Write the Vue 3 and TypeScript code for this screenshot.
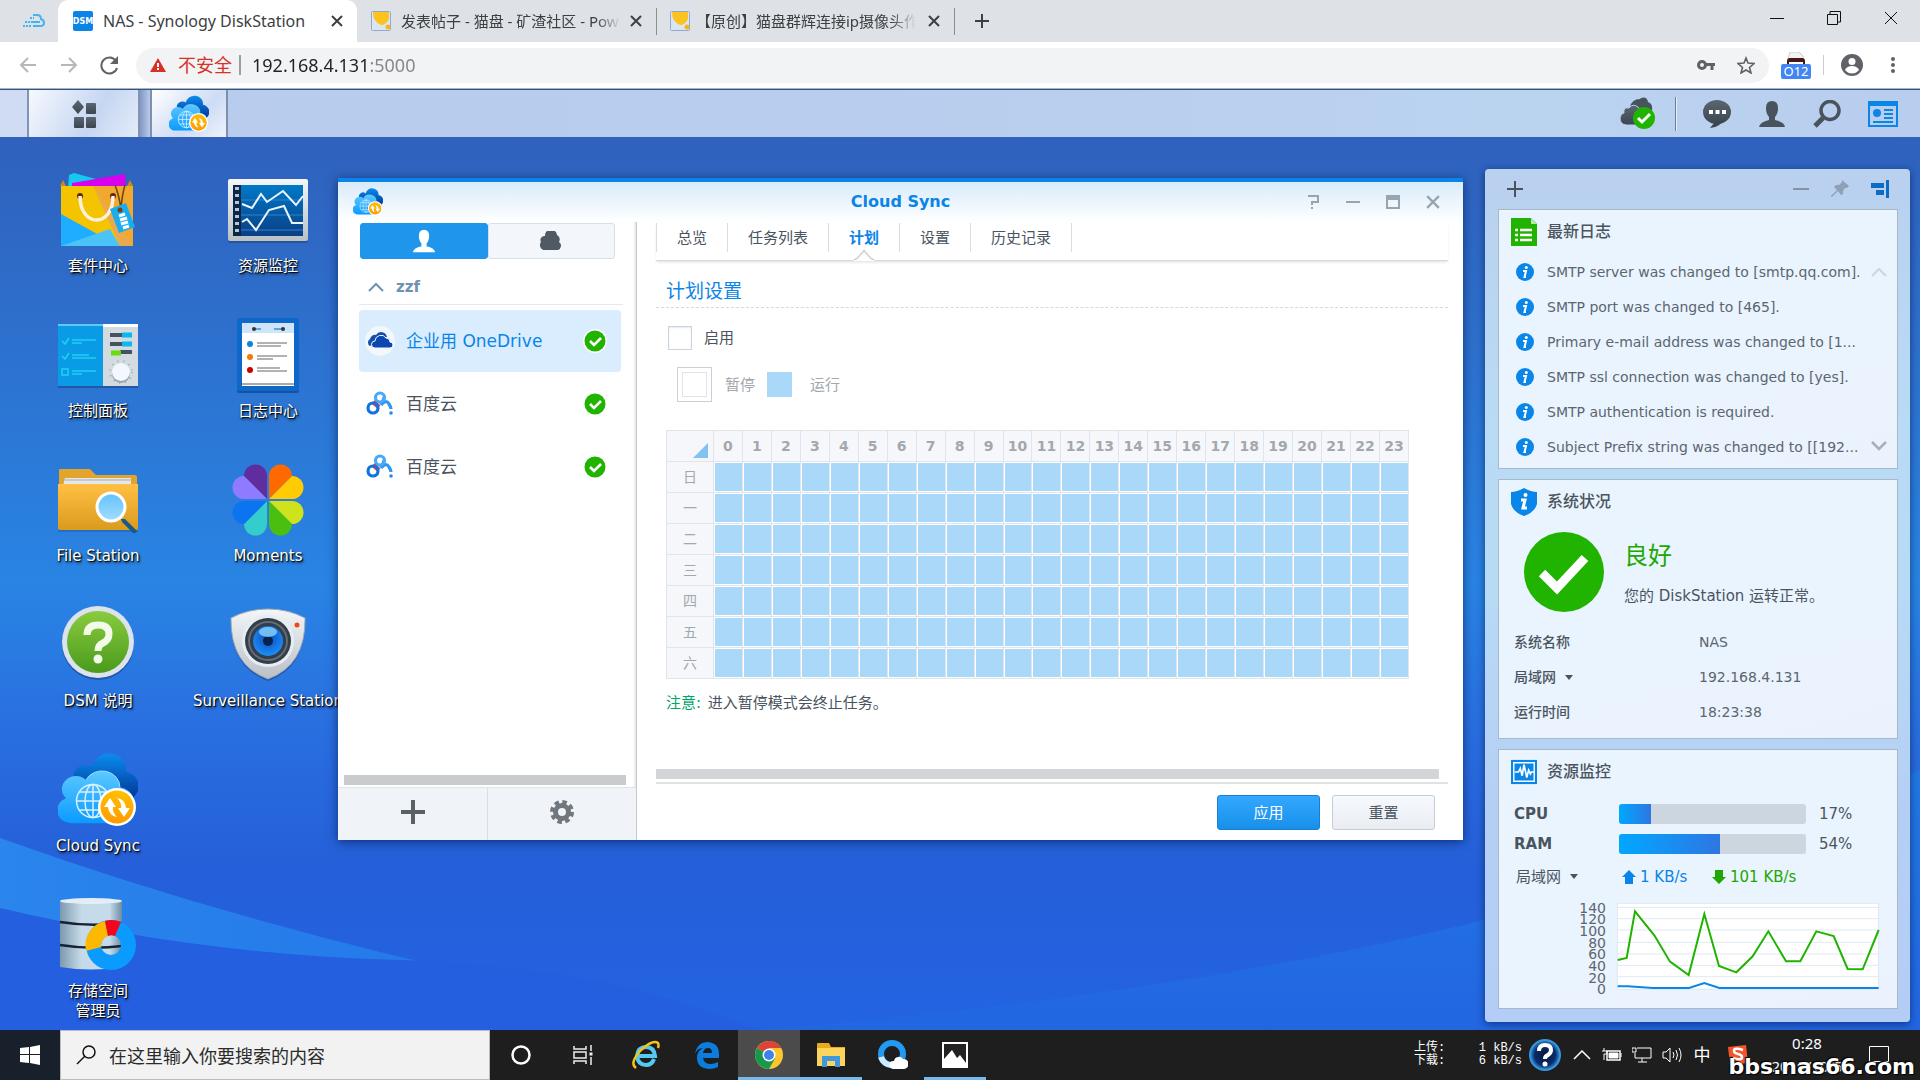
<script setup lang="ts">
import { ref } from 'vue'

interface DesktopApp { icon: string; label: string }
interface Connection { icon: string; name: string }

const columns: DesktopApp[][] = [
  [
    { icon: 'i-package', label: '套件中心' },
    { icon: 'i-control', label: '控制面板' },
    { icon: 'i-file', label: 'File Station' },
    { icon: 'i-help', label: 'DSM 说明' },
    { icon: 'i-cloudsync', label: 'Cloud Sync' },
    { icon: 'i-storage', label: '存储空间\n管理员' },
  ],
  [
    { icon: 'i-monitor', label: '资源监控' },
    { icon: 'i-log', label: '日志中心' },
    { icon: 'i-moments', label: 'Moments' },
    { icon: 'i-surveillance', label: 'Surveillance Station' },
  ],
]

const connections: Connection[] = [
  { icon: 'i-onedrive', name: '企业用 OneDrive' },
  { icon: 'i-baidu', name: '百度云' },
  { icon: 'i-baidu', name: '百度云' },
]
const selected = ref(0)

const tabs = ['总览', '任务列表', '计划', '设置', '历史记录']
const activeTab = ref(2)

const hours = Array.from({ length: 24 }, (_, i) => i)
const days = ['日', '一', '二', '三', '四', '五', '六']

const logs = [
  'SMTP server was changed to [smtp.qq.com].',
  'SMTP port was changed to [465].',
  'Primary e-mail address was changed to [1...',
  'SMTP ssl connection was changed to [yes].',
  'SMTP authentication is required.',
  'Subject Prefix string was changed to [[192...',
]

const meters = [
  { name: 'CPU', value: 17 },
  { name: 'RAM', value: 54 },
]

const axis = [140, 120, 100, 80, 60, 40, 20, 0]
const enabled = ref(false)
const address = ref('192.168.4.131:5000')
const query = ref('')
</script>

<template>
  <div class="screen">
    <svg class="defs" width="0" height="0" aria-hidden="true">
      <defs>
        <linearGradient id="g-front" x1="0" y1="0" x2="0" y2="1"><stop offset="0" stop-color="#5cc8ff" /><stop offset="1" stop-color="#0a9bff" /></linearGradient>
        <linearGradient id="g-back" x1="0" y1="0" x2="0" y2="1"><stop offset="0" stop-color="#0a8df0" /><stop offset="1" stop-color="#00308f" /></linearGradient>
        <linearGradient id="g-badge" x1="0" y1="0" x2="0" y2="1"><stop offset="0" stop-color="#ffc000" /><stop offset="1" stop-color="#ff9a00" /></linearGradient>
        <linearGradient id="g-silver" x1="0" y1="0" x2="0" y2="1"><stop offset="0" stop-color="#f4f6f8" /><stop offset="1" stop-color="#b9c0c6" /></linearGradient>
        <linearGradient id="g-disk" x1="0" y1="0" x2="1" y2="0"><stop offset="0" stop-color="#7d99ae" /><stop offset=".35" stop-color="#c6dbe9" /><stop offset=".8" stop-color="#c6dbe9" /><stop offset="1" stop-color="#6d8ba3" /></linearGradient>
        <linearGradient id="g-folder" x1="0" y1="0" x2="0" y2="1"><stop offset="0" stop-color="#ffc043" /><stop offset="1" stop-color="#d99a1d" /></linearGradient>
        <linearGradient id="g-green" x1="0" y1="0" x2="0" y2="1"><stop offset="0" stop-color="#8acb3f" /><stop offset="1" stop-color="#4a9a1c" /></linearGradient>
        <linearGradient id="g-screen" x1="0" y1="0" x2="0" y2="1"><stop offset="0" stop-color="#0079c8" /><stop offset="1" stop-color="#0a3f86" /></linearGradient>
        <linearGradient id="g-glass" x1="0" y1="0" x2="0" y2="1"><stop offset="0" stop-color="#62c3fb" /><stop offset="1" stop-color="#a4dcfd" /></linearGradient>
        <radialGradient id="g-lens" cx=".5" cy=".4" r=".6"><stop offset="0" stop-color="#0d4fa5" /><stop offset=".45" stop-color="#1568d8" /><stop offset="1" stop-color="#1a90f5" /></radialGradient>
        <radialGradient id="g-ask" cx=".5" cy=".5" r=".5"><stop offset="0" stop-color="#06143a" /><stop offset=".7" stop-color="#0b2d6c" /><stop offset="1" stop-color="#2f95dd" /></radialGradient>
        <linearGradient id="g-dark" x1="0" y1="0" x2="0" y2="1"><stop offset="0" stop-color="#5a6671" /><stop offset="1" stop-color="#3c4650" /></linearGradient>
      </defs>

      <symbol id="i-cloudsync" viewBox="0 0 80 80">
        <g transform="translate(0 6) scale(1 .92)">
          <path d="M20 30a11 11 0 0 1 14-18 17 17 0 0 1 34 5 16 16 0 0 1 9 26q-4 6-12 6H30z" fill="url(#g-back)" />
          <path d="M13 73a14 14 0 0 1-5-27 12 12 0 0 1 20-20 18 18 0 0 1 34 8 17 17 0 0 1 8 30q-4 9-10 9z" fill="url(#g-front)" />
          <path d="M28 26a18 18 0 0 1 34 8" fill="none" stroke="#a7e1ff" stroke-width="1" />
        </g>
        <g fill="none" stroke="#d8f1ff" stroke-width="1.500"><circle cx="35" cy="51" r="16.500" /><ellipse cx="35" cy="51" rx="8" ry="16.500" /><path d="M35 34v34M18.500 51h33M21 42h28M21 60h28" /></g>
        <circle cx="59" cy="57" r="19" fill="#fff" /><circle cx="59" cy="57" r="16.500" fill="url(#g-badge)" />
        <path d="M46 57l6-9 6 9h-3q-1 5 4 10-8-1-9-10zM72 58l-6 9-6-9h3q1-5-4-10 8 1 9 10z" fill="#fff" />
      </symbol>

      <symbol id="i-package" viewBox="0 0 80 80">
        <path d="M11 5l5-2 22 6-5 9H10z" fill="#15c8f0" /><path d="M14 13l53-9 1 14H14z" fill="#d900f0" />
        <path d="M5 10l3 6h-6zM72 10l-3 6h6z" fill="#c88a1a" />
        <path d="M3 16h72v60H3z" fill="#f4c400" /><path d="M35 16h40v60z" fill="#f2a82c" /><path d="M35 16L75 76H62z" fill="#e9a94e" /><path d="M3 44l58 32H3z" fill="#1fadff" /><path d="M3 76l49-17 10 17z" fill="#4cc3f7" />
        <circle cx="22" cy="26" r="3" fill="#5c2c10" /><circle cx="55" cy="26" r="3" fill="#5c2c10" />
        <path d="M22 26c0 32 33 32 33 0" fill="none" stroke="#fff1dc" stroke-width="3.500" />
        <path d="M57 15q4 10 6 24q1-14 4-24" fill="none" stroke="#6b4512" stroke-width="1.500" />
        <path d="M52 39l16-6 9 24-16 6z" fill="#18adf2" /><circle cx="62" cy="40" r="2.500" fill="#6b4512" /><path d="M61 46l6-2M62 50l7-2M63 54l7-2M65 58l6-2" stroke="#fff" stroke-width="3" />
      </symbol>

      <symbol id="i-monitor" viewBox="0 0 80 80">
        <rect y="10" width="80" height="63" rx="2" fill="#21406d" opacity=".5" /><rect y="9" width="80" height="62" rx="2" fill="url(#g-silver)" />
        <rect x="5" y="15" width="70" height="51" fill="url(#g-screen)" /><rect x="5" y="15" width="8" height="51" fill="#0c2647" />
        <path d="M9 17v48" stroke="#b8c6d6" stroke-width="4" stroke-dasharray="3 4" />
        <path d="M13 30h62M13 45h62M13 60h62" stroke="#2c83cc" /><path d="M14 34l10 4 9-14 6 8 16-11 13 14 7-9M14 52l5-3 9 11 13-20 15-4 8 17h11" fill="none" stroke="#eaf6ff" stroke-width="2" />
      </symbol>

      <symbol id="i-control" viewBox="0 0 80 80">
        <path d="M0 11h80v62H0z" fill="#173a73" opacity=".5" /><path d="M0 9h45v62H0z" fill="#0a9be6" /><path d="M0 9h45v2H0z" fill="#5cc8ff" /><path d="M45 9h35v62H45z" fill="#d3dae0" /><path d="M45 9h35v3H45z" fill="#fff" />
        <path d="M4 26l3 3 4-6M4 41l3 3 4-6M4 54h6v6H4zM14 25h24M14 28h10M14 40h17M14 43h24M14 56h24M14 59h10" fill="none" stroke="#21d0f5" stroke-width="1.500" />
        <path d="M52 20h12M52 29h12M62 37h12" stroke="#46535e" stroke-width="4" /><path d="M64 20h10M64 29h10" stroke="#0bb8f2" stroke-width="5" /><path d="M53 38h10" stroke="#6adb0c" stroke-width="5" />
        <circle cx="63" cy="57" r="11" fill="none" stroke="#9aa8b3" stroke-width="2" stroke-dasharray="1 5" /><circle cx="63" cy="59" r="9" fill="#99a5ae" /><circle cx="63" cy="57" r="9" fill="#f2f8fd" />
      </symbol>

      <symbol id="i-log" viewBox="0 0 80 80">
        <rect x="9" y="5" width="62" height="73" rx="2" fill="#083a84" opacity=".6" /><rect x="9" y="3" width="62" height="73" rx="2" fill="#0d68c9" />
        <path d="M14 8h52v63H14z" fill="#fff" /><path d="M14 8h52v10H14z" fill="#cfe4f8" /><path d="M14 69h52" stroke="#555" />
        <path d="M25 14h8M46 14h8" stroke="#5aa8d8" stroke-width="2" /><circle cx="26" cy="14" r="2" fill="#333" /><circle cx="55" cy="14" r="2" fill="#333" />
        <circle cx="22" cy="29" r="3" fill="#0a86dc" /><circle cx="22" cy="42" r="3" fill="#f57a00" /><circle cx="22" cy="55" r="3" fill="#c80000" />
        <path d="M29 28h30M29 31h24M29 41h30M29 44h16M29 53h23M29 56h30" stroke="#999" stroke-width="1.500" />
      </symbol>

      <symbol id="i-file" viewBox="0 0 80 80">
        <path d="M1 10q0-1 1-1h30l6 6h39q2 0 2 2v20H1z" fill="#e3a42c" /><path d="M7 18h66v8H5z" fill="#e4e6e8" /><path d="M7 20h66" stroke="#a9adb0" />
        <path d="M0 24h80v44q0 2-2 2H2q-2 0-2-2z" fill="url(#g-folder)" /><path d="M0 71h80" stroke="#1b3e6d" opacity=".5" />
        <path d="M63 59l4 0 12 12q-2 4-5 1L64 62z" fill="#175a86" /><circle cx="53" cy="47" r="14" fill="url(#g-glass)" stroke="#fff" stroke-width="3" />
      </symbol>

      <symbol id="i-moments" viewBox="0 0 80 80">
        <path d="M39 39L16 16A11.500 11.500 0 0 1 39 16z" fill="#5f2da0" /><path d="M39 39L16 16A11.500 11.500 0 0 0 16 39z" fill="#8f7bff" />
        <path d="M41 39L64 16A11.500 11.500 0 0 0 41 16z" fill="#ff6a00" /><path d="M41 39L64 16A11.500 11.500 0 0 1 64 39z" fill="#ffcb05" />
        <path d="M39 41L16 64A11.500 11.500 0 0 0 39 64z" fill="#33cdcb" /><path d="M39 41L16 64A11.500 11.500 0 0 1 16 41z" fill="#0c74f0" />
        <path d="M41 41L64 64A11.500 11.500 0 0 1 41 64z" fill="#4bbf10" /><path d="M41 41L64 64A11.500 11.500 0 0 0 64 41z" fill="#cfe31d" />
      </symbol>

      <symbol id="i-help" viewBox="0 0 80 80">
        <circle cx="40" cy="39" r="36" fill="#173a73" opacity=".5" /><circle cx="40" cy="37" r="36" fill="#dbe3ec" /><circle cx="40" cy="37" r="31" fill="url(#g-green)" />
        <path d="M29 30q0-10 11-10t11 9q0 6-6 9-5 2-5 8" fill="none" stroke="#f2fbe8" stroke-width="7" /><circle cx="40" cy="54" r="4.500" fill="#f2fbe8" />
      </symbol>

      <symbol id="i-surveillance" viewBox="0 0 80 80">
        <path d="M40 6Q60 6 77 15Q78 62 40 76Q2 62 3 15Q20 6 40 6z" fill="#173a73" opacity=".5" /><path d="M40 4Q60 4 77 13Q78 60 40 74Q2 60 3 13Q20 4 40 4z" fill="url(#g-silver)" stroke="#9ea8b0" />
        <circle cx="40" cy="36" r="26" fill="#e6edf3" /><circle cx="40" cy="36" r="23" fill="#343e48" /><circle cx="40" cy="36" r="19" fill="none" stroke="#606c78" stroke-width="2" /><circle cx="40" cy="36" r="15" fill="url(#g-lens)" /><circle cx="40" cy="36" r="5" fill="#06224e" />
        <ellipse cx="40" cy="27" rx="9" ry="5" fill="#8ad4ff" opacity=".8" /><circle cx="69" cy="20" r="2.500" fill="#f04a12" />
      </symbol>

      <symbol id="i-storage" viewBox="0 0 80 80">
        <path d="M2 6v66q31 5 62 0V6z" fill="url(#g-disk)" /><ellipse cx="33" cy="6" rx="31" ry="3" fill="#e3edf4" /><path d="M2 27q31 5 62 1M2 50q31 5 62 1" fill="none" stroke="#142434" stroke-width="2.500" />
        <circle cx="53" cy="50" r="17.500" fill="none" stroke="#0b9bff" stroke-width="15" />
        <path d="M28 56A25 25 0 0 1 47 26L50 41A10 10 0 0 0 43 52z" fill="#fdb900" /><path d="M47 26A25 25 0 0 1 63 27L57 41A10 10 0 0 0 50 41z" fill="#f3061b" />
      </symbol>

      <symbol id="i-user" viewBox="0 0 28 28"><path d="M8 8q0-7 6-7t6 7q0 6-3 9v3q9 2 10 7H1q1-5 10-7v-3q-3-3-3-9z" fill="currentColor" /></symbol>
      <symbol id="i-cloud" viewBox="0 0 24 20"><path d="M5 19a5 5 0 0 1-3-8 4 4 0 0 1 4-6 5.500 5.500 0 0 1 12-1 5 5 0 0 1 2 7 4.500 4.500 0 0 1-1 8z" fill="currentColor" /></symbol>
      <symbol id="i-onedrive" viewBox="0 0 30 30"><circle cx="15" cy="15" r="15" fill="#f2f7fb" /><path d="M5 20a4 4 0 0 1 0-7 5 5 0 0 1 6-4 6 6 0 0 1 11 2l-8 3z" fill="#1650ae" /><path d="M10 22a3.500 3.500 0 0 1 0-7 6 6 0 0 1 11-3 4 4 0 0 1 4 4 3 3 0 0 1 0 6z" fill="#0c47b0" stroke="#f2f7fb" /></symbol>
      <symbol id="i-baidu" viewBox="0 0 30 30"><path d="M19 8q0 4-4 7M16 16q5-6 8-1 2 3 2 5" fill="none" stroke="#2f96f3" stroke-width="3.200" /><circle cx="15" cy="8.500" r="4.500" fill="none" stroke="#4aa8fa" stroke-width="3.200" /><path d="M8 13l6 5" stroke="#ee3940" stroke-width="4.500" /><circle cx="8" cy="19" r="5" fill="none" stroke="#1373dc" stroke-width="3.200" /><circle cx="26" cy="24" r="1.800" fill="#2f86ea" /></symbol>
      <symbol id="i-ok" viewBox="0 0 24 24"><circle cx="12" cy="12" r="12" fill="#fff" /><circle cx="12" cy="12" r="10.500" fill="#20b300" /><path d="M7 12l4 4 7-7" fill="none" stroke="#fff" stroke-width="2.600" /></symbol>
      <symbol id="i-info" viewBox="0 0 18 18"><circle cx="9" cy="9" r="9" fill="#0a86e8" /><circle cx="10.300" cy="4.600" r="1.500" fill="#fff" /><path d="M7 8h3l-1.500 6H10" fill="none" stroke="#fff" stroke-width="2" /></symbol>
      <symbol id="i-x" viewBox="0 0 12 12"><path d="M1 1l10 10M11 1L1 11" stroke="currentColor" stroke-width="2" /></symbol>
      <symbol id="i-page" viewBox="0 0 20 20"><rect x=".5" y=".5" width="19" height="19" rx="1" fill="#dbe6f4" stroke="#93a9c8" /><path d="M2 1h16v7q-3 6-8 6-8-3-8-13z" fill="#fcc21d" /><circle cx="17" cy="16" r="2.500" fill="#f9b31c" /></symbol>
    </svg>

    <header class="browser">
      <div class="tabstrip">
        <button class="pinned" aria-label="固定标签"><svg width="22" height="14" viewBox="0 0 22 14"><g fill="none" stroke="#41b4f5" stroke-width="2"><path d="M0 12h8M2 8h7M7 4h4" stroke-dasharray="2 1" /><path d="M10 1h4q4 0 4 4 3 1 3 4t-4 3h-7M9 8h8" /></g></svg></button>
        <div class="tab current">
          <svg width="20" height="24" viewBox="0 0 20 24"><rect y="2" width="20" height="20" rx="2" fill="#0a84e6" /><text x="10" y="15" text-anchor="middle" font-family="DejaVu Sans" font-weight="700" font-size="8" fill="#fff">DSM</text></svg>
          <span class="tab-title">NAS - Synology DiskStation</span>
          <button class="x" aria-label="关闭标签"><svg width="12" height="12"><use href="#i-x" /></svg></button>
        </div>
        <div class="tab">
          <svg width="20" height="20"><use href="#i-page" /></svg>
          <span class="tab-title fade">发表帖子 - 猫盘 - 矿渣社区 - Pow</span>
          <button class="x" aria-label="关闭标签"><svg width="12" height="12"><use href="#i-x" /></svg></button>
        </div>
        <div class="tab last">
          <svg width="20" height="20"><use href="#i-page" /></svg>
          <span class="tab-title fade bracket">【原创】猫盘群辉连接ip摄像头作</span>
          <button class="x" aria-label="关闭标签"><svg width="12" height="12"><use href="#i-x" /></svg></button>
        </div>
        <button class="new-tab" aria-label="新标签"><svg width="16" height="16"><path d="M8 1v14M1 8h14" stroke="#3c4043" stroke-width="2" /></svg></button>
        <div class="win-controls">
          <button aria-label="最小化"><svg width="14" height="14"><path d="M0 7.500h14" stroke="#111" /></svg></button>
          <button aria-label="还原"><svg width="14" height="14"><path d="M.5 3.500h10v10H.5zM3 3V.500h10.500V11H11" fill="none" stroke="#111" /></svg></button>
          <button aria-label="关闭"><svg width="14" height="14"><path d="M1 1l12 12M13 1L1 13" stroke="#111" /></svg></button>
        </div>
      </div>
      <div class="toolbar">
        <div class="nav">
          <button aria-label="后退"><svg width="18" height="16"><path d="M17 8H2M9 1L2 8l7 7" fill="none" stroke="#b5b8bb" stroke-width="2" /></svg></button>
          <button aria-label="前进"><svg width="18" height="16"><path d="M1 8h15M9 1l7 7-7 7" fill="none" stroke="#b5b8bb" stroke-width="2" /></svg></button>
          <button aria-label="刷新"><svg width="20" height="20"><path d="M16 6a8 8 0 1 0 1 7" fill="none" stroke="#5f6368" stroke-width="2" /><path d="M18 1v8h-8z" fill="#5f6368" /></svg></button>
        </div>
        <div class="omnibox">
          <svg width="16" height="14"><path d="M8 0l8 14H0z" fill="#d93025" /><path d="M8 5v4M8 10v2" stroke="#fff" stroke-width="2" /></svg>
          <span class="insecure">不安全</span>
          <input v-model="address" aria-label="地址" />
          <svg width="18" height="12"><circle cx="5" cy="6" r="3.500" fill="none" stroke="#5f6368" stroke-width="3" /><path d="M9 5.500h9M15 6v5" stroke="#5f6368" stroke-width="3" /></svg>
          <svg width="18" height="18" viewBox="0 0 18 18"><path d="M9 2l2 5 6 .5-4.500 4L14 17l-5-3-5 3 1.500-5.500L1 7.500 7 7z" fill="none" stroke="#5f6368" stroke-width="1.600" /></svg>
        </div>
        <div class="ext"><svg width="20" height="12"><path d="M4 0h9l4 4v3H2z" fill="#f3f3f3" stroke="#ccc" /><path d="M1 12V9q0-3 3-3h12q3 0 3 3v3h-2v-2H3v2z" fill="#4a1414" /></svg><span>O12</span></div>
        <button class="avatar" aria-label="用户"><svg width="22" height="22"><circle cx="11" cy="11" r="11" fill="#5f6368" /><circle cx="11" cy="7.500" r="3.500" fill="#fff" /><path d="M4 16q2-4 7-4t7 4q-3 3.500-7 3.500T4 16z" fill="#fff" /></svg></button>
        <button aria-label="菜单"><svg width="4" height="18" fill="#5f6368"><circle cx="2" cy="3" r="2" /><circle cx="2" cy="9" r="2" /><circle cx="2" cy="15" r="2" /></svg></button>
      </div>
    </header>

    <nav class="dsm-bar">
      <span class="edge"></span>
      <button class="main-menu" aria-label="主菜单"><svg width="24" height="28" fill="url(#g-dark)"><path d="M6 0l6 7-6 7-6-7z" /><rect x="14" y="3" width="10" height="11" rx="1" /><rect x="2" y="17" width="10" height="11" rx="1" /><rect x="14" y="17" width="10" height="11" rx="1" /></svg></button>
      <span class="divider"></span>
      <button class="running" aria-label="Cloud Sync"><svg width="40" height="40"><use href="#i-cloudsync" /></svg></button>
      <div class="tray">
        <button aria-label="同步状态"><svg width="36" height="34" viewBox="0 0 36 34"><path d="M10 10q2-8 10-8l1-1q6-2 7 4 5 2 4 8l-6 5z" fill="#48535e" /><path d="M6 28q-6-1-6-7 1-5 4-5-1-6 5-5 4-5 9-1l4 5 4 13z" fill="url(#g-dark)" stroke="#b9cdee" /><circle cx="24" cy="21" r="11" fill="#20b300" /><path d="M18 21l4 4 8-8" fill="none" stroke="#fff" stroke-width="3" /></svg></button>
        <span class="bar-sep"></span>
        <button aria-label="通知"><svg width="28" height="28"><ellipse cx="14" cy="12" rx="14" ry="12" fill="url(#g-dark)" /><path d="M12 22l-5 6q9-1 12-6z" fill="#3c4650" /><path d="M6 12h17" stroke="#fff" stroke-width="4" stroke-dasharray="4 2.500" /></svg></button>
        <button class="dark" aria-label="用户选项"><svg width="28" height="28"><use href="#i-user" /></svg></button>
        <button aria-label="搜索"><svg width="28" height="28"><circle cx="17" cy="10.500" r="9" fill="none" stroke="#48535e" stroke-width="3.500" /><path d="M10 18l-8 8" stroke="#48535e" stroke-width="5" /></svg></button>
        <button aria-label="小工具"><svg width="30" height="26"><rect x="1" y="1" width="28" height="24" fill="none" stroke="#0a86e8" stroke-width="2" /><path d="M0 0h30v5H0z" fill="#0a86e8" /><circle cx="9" cy="12" r="4" fill="#0a86e8" /><path d="M16 9h9M16 13h9M16 17h9M5 21h20" stroke="#0a86e8" stroke-width="2" /></svg></button>
      </div>
    </nav>

    <main class="desktop">
      <svg class="wallpaper" viewBox="0 137 1920 893" preserveAspectRatio="none" aria-hidden="true">
        <defs>
          <linearGradient id="sky" x1="0" y1="0" x2="0" y2="1"><stop offset="0" stop-color="#2f61bd" /><stop offset=".25" stop-color="#2d72cf" /><stop offset=".5" stop-color="#2984e4" /><stop offset=".66" stop-color="#296fe0" /><stop offset=".82" stop-color="#255fd9" /><stop offset="1" stop-color="#2363e2" /></linearGradient>
          <linearGradient id="wave" x1="0" y1="0" x2="1" y2="0"><stop offset="0" stop-color="#2a85ec" /><stop offset="1" stop-color="#2070e8" /></linearGradient>
          <linearGradient id="hill" x1="0" y1="0" x2="0" y2="1"><stop offset="0" stop-color="#2278e4" /><stop offset="1" stop-color="#2266e2" /></linearGradient>
        </defs>
        <path d="M0 137h1920v893H0z" fill="url(#sky)" />
        <path d="M0 838Q340 960 760 1030H0z" fill="url(#wave)" /><path d="M0 908Q200 955 400 960T760 1030H0z" fill="#245fe0" />
        <path d="M760 1030Q1500 970 1920 770V1030z" fill="url(#hill)" />
      </svg>

      <div class="icons">
        <div v-for="(column, c) in columns" :key="c" class="icon-col">
          <button v-for="app in column" :key="app.label" class="app">
            <svg width="80" height="80"><use :href="'#' + app.icon" /></svg>
            <span>{{ app.label }}</span>
          </button>
        </div>
      </div>

      <section class="window">
        <div class="titlebar">
          <svg width="30" height="30"><use href="#i-cloudsync" /></svg>
          <h1>Cloud Sync</h1>
          <div class="title-tools">
            <button aria-label="帮助"><svg width="14" height="14"><path d="M2 1h10v6H6v3M6 12v2" fill="none" stroke="currentColor" stroke-width="2" /></svg></button>
            <button aria-label="最小化"><svg width="14" height="14"><path d="M0 7h14" stroke="currentColor" stroke-width="2" /></svg></button>
            <button aria-label="最大化"><svg width="14" height="14"><path d="M1 1h12v12H1z" fill="none" stroke="currentColor" stroke-width="2" /><path d="M0 3h14" stroke="currentColor" stroke-width="4" /></svg></button>
            <button aria-label="关闭"><svg width="14" height="14"><use href="#i-x" /></svg></button>
          </div>
        </div>
        <div class="window-body">
          <aside class="sidebar">
            <div class="segments">
              <button class="on" aria-label="用户"><svg width="24" height="24"><use href="#i-user" /></svg></button>
              <button aria-label="云"><svg width="24" height="20"><use href="#i-cloud" /></svg></button>
            </div>
            <button class="group"><svg width="16" height="10"><path d="M1 9l7-7 7 7" fill="none" stroke="currentColor" stroke-width="2" /></svg>zzf</button>
            <ul class="connections">
              <li v-for="(item, i) in connections" :key="i">
                <button :class="{ picked: selected === i }" @click="selected = i">
                  <svg width="30" height="30"><use :href="'#' + item.icon" /></svg>
                  <span>{{ item.name }}</span>
                  <svg width="24" height="24"><use href="#i-ok" /></svg>
                </button>
              </li>
            </ul>
            <div class="hscroll side"></div>
            <div class="side-actions">
              <button aria-label="添加"><svg width="26" height="26"><path d="M13 1v24M1 13h24" stroke="#5a6067" stroke-width="4" /></svg></button>
              <button aria-label="设置"><svg width="26" height="26"><circle cx="13" cy="13" r="10" fill="none" stroke="#70777e" stroke-width="4" stroke-dasharray="4.500 3.354" /><circle cx="13" cy="13" r="6.500" fill="none" stroke="#70777e" stroke-width="5" /></svg></button>
            </div>
          </aside>

          <div class="content">
            <div class="tabs">
              <button v-for="(tab, i) in tabs" :key="tab" :class="{ active: activeTab === i }" @click="activeTab = i">{{ tab }}<svg v-if="activeTab === i" class="notch" width="20" height="12"><path d="M0 11l3-1 7-8 7 8 3 1v1H0z" fill="#fff" /><path d="M0 10.500q2 0 4-2l6-7 6 7q2 2 4 2" fill="none" stroke="#cfcfcf" stroke-width="1.500" /></svg></button>
            </div>
            <h2>计划设置</h2>
            <label class="enable"><input v-model="enabled" type="checkbox" />启用</label>
            <div class="legend">
              <label class="pause"><input type="radio" name="mode" checked disabled /><span>暂停</span></label>
              <label class="run"><input type="radio" name="mode" disabled /><span>运行</span></label>
            </div>
            <table>
              <thead><tr><th class="corner"><svg width="15" height="15"><path d="M15 0v15H0z" fill="#82c2f2" /></svg></th><th v-for="h in hours" :key="h">{{ h }}</th></tr></thead>
              <tbody><tr v-for="d in days" :key="d"><th>{{ d }}</th><td v-for="h in hours" :key="h"></td></tr></tbody>
            </table>
            <p class="note"><span>注意:</span> 进入暂停模式会终止任务。</p>
            <div class="hscroll main"></div>
            <div class="actions"><button class="primary">应用</button><button>重置</button></div>
          </div>
        </div>
      </section>

      <aside class="widgets">
        <div class="widgets-head">
          <button class="add" aria-label="添加小工具"><svg width="16" height="16"><path d="M8 0v16M0 8h16" stroke="#48535e" stroke-width="2" /></svg></button>
          <button aria-label="最小化"><svg width="16" height="18"><path d="M0 9h16" stroke="#8492a3" stroke-width="2" /></svg></button>
          <button aria-label="固定"><svg width="18" height="18" viewBox="0 0 18 18"><path d="M11 0l7 6-2 2-2 0-2 3 0 3-2 1-3-4-6 6-1 0 0-1 6-6-3-3 2-2h3l3-3z" fill="#8fa0b7" /></svg></button>
          <button aria-label="停靠"><svg width="18" height="18" fill="#0a6cc4"><path d="M0 3h13v5H0zM5 10h8v5H5zM15 0h3v18h-3z" /></svg></button>
        </div>

        <section class="card">
          <h3><svg width="26" height="28"><path d="M0 0h20l6 6v22H0z" fill="#20b300" /><path d="M20 0v6h6" fill="#b9e8ae" /><path d="M4 12h3M4 17h3M4 22h3M9 12h12M9 17h12M9 22h12" stroke="#fff" stroke-width="2.500" /></svg>最新日志</h3>
          <div class="log-area">
            <ul>
              <li v-for="line in logs" :key="line"><svg width="18" height="18"><use href="#i-info" /></svg><span>{{ line }}</span></li>
            </ul>
            <div class="log-scroll">
              <button aria-label="上"><svg width="16" height="10"><path d="M1 9l7-7 7 7" fill="none" stroke="#ccd5dc" stroke-width="2" /></svg></button>
              <button aria-label="下"><svg width="16" height="10"><path d="M1 1l7 7 7-7" fill="none" stroke="#a5b0b8" stroke-width="2.500" /></svg></button>
            </div>
          </div>
        </section>

        <section class="card">
          <h3><svg width="26" height="28" viewBox="0 0 26 28"><path d="M13 0q7 4 13 4v12q-2 8-13 12Q2 24 0 16V4q6 0 13-4z" fill="#0a86e8" /><circle cx="14.500" cy="7" r="2" fill="#fff" /><path d="M10 12h4l-2 8h4" fill="none" stroke="#fff" stroke-width="3" /></svg>系统状况</h3>
          <div class="health">
            <svg width="80" height="80"><circle cx="40" cy="40" r="40" fill="#20b300" /><path d="M18 41l15 15 28-30" fill="none" stroke="#fff" stroke-width="9" /></svg>
            <div><strong>良好</strong><p>您的 DiskStation 运转正常。</p></div>
          </div>
          <dl>
            <dt>系统名称</dt><dd>NAS</dd>
            <dt>局域网<i class="caret"></i></dt><dd>192.168.4.131</dd>
            <dt>运行时间</dt><dd>18:23:38</dd>
          </dl>
        </section>

        <section class="card">
          <h3><svg width="28" height="26" viewBox="0 0 28 26"><path d="M0 0h28v26H0z" fill="#0a86e8" /><path d="M3 3h22v20H3z" fill="none" stroke="#fff" stroke-width="1.500" /><path d="M4 13h4l2-4 2 8 2-12 3 14 2-8 2 4 1-2h3" fill="none" stroke="#fff" stroke-width="1.800" /></svg>资源监控</h3>
          <div class="meters">
            <div v-for="m in meters" :key="m.name" class="meter"><b>{{ m.name }}</b><div class="track"><div class="fill" :style="{ width: m.value + '%' }"></div></div><span>{{ m.value }}%</span></div>
          </div>
          <div class="net">
            <button>局域网<i class="caret"></i></button>
            <span class="up"><svg width="14" height="14"><path d="M7 0l7 7h-3v7H3V7H0z" fill="currentColor" /></svg>1 KB/s</span>
            <span class="down"><svg width="14" height="14"><path d="M7 14L0 7h3V0h8v7h3z" fill="currentColor" /></svg>101 KB/s</span>
          </div>
          <svg class="chart" width="300" height="97" viewBox="300 480 900 291">
            <path d="M412 490h784v258H412z" fill="#fff" stroke="#dde8f1" stroke-width="3" />
            <path d="M412 502h784M412 536h784M412 570h784M412 607h784M412 642h784M412 676h784M412 710h784" stroke="#dfeaf3" stroke-width="3" />
            <path d="M413 739h30l76 5h108l46-15 45 15h478" fill="none" stroke="#0a86e8" stroke-width="6" />
            <path d="M413 660l27-6 25-140 58 72 47 79 56 40 47-183 44 156 52 19 49-48 47-75 53 90h43l48-90 52 14 42 99 45 1 48-118" fill="none" stroke="#20b300" stroke-width="6" />
            <text v-for="(n, i) in axis" :key="n" x="378" :y="518 + i * 35" text-anchor="end">{{ n }}</text>
          </svg>
        </section>
      </aside>
    </main>

    <footer class="taskbar">
      <button class="start" aria-label="开始"><svg width="20" height="20" fill="#fff"><path d="M0 3l9-1v7H0zM10 2l10-2v9H10zM0 10h9v8l-9-1zM10 10h10v10l-10-2z" /></svg></button>
      <label class="search"><svg width="20" height="20"><circle cx="13" cy="7" r="6" fill="none" stroke="#111" stroke-width="1.500" /><path d="M9 11l-8 8" stroke="#111" stroke-width="1.500" /></svg><input v-model="query" placeholder="在这里输入你要搜索的内容" aria-label="搜索" /></label>
      <div class="pins">
        <button aria-label="Cortana"><svg width="20" height="20"><circle cx="10" cy="10" r="8.500" fill="none" stroke="#fff" stroke-width="2.500" /></svg></button>
        <button aria-label="任务视图"><svg width="20" height="20" fill="none" stroke="#eee" stroke-width="1.500"><path d="M1 1v3h12V1M1 7h12v6H1zM1 19v-3h12v3M18 0v6M18 12v8" /><path d="M16.500 9h3" stroke-width="3" /></svg></button>
        <button aria-label="Internet Explorer"><svg width="30" height="30" viewBox="0 0 30 30"><path d="M24 19q-2 6-8 6-8 0-9-9 1-9 9-9 8 0 9 9H8" fill="none" stroke="#55c9f2" stroke-width="4" /><path d="M6 28Q-1 23 11 10 23-1 28 3q1 2 0 5" fill="none" stroke="#f6c21c" stroke-width="2.500" /></svg></button>
        <button aria-label="Edge"><svg width="26" height="28" viewBox="0 0 26 28"><path d="M1 13Q3 1 14 1q11 1 11 12v4H9q1 6 8 6 3 0 7-2v5q-4 2-9 2-12-1-12-11 0-7 6-10-6 0-8 6zM9 12h9q0-5-4-5-4 0-5 5z" fill="#0a7ddf" fill-rule="evenodd" /></svg></button>
        <button class="open focused" aria-label="Chrome"><svg width="28" height="28" viewBox="0 0 28 28"><circle cx="14" cy="14" r="14" fill="#fdc62e" /><path d="M14 14L1.900 7A14 14 0 0 1 26.100 7z" fill="#dc4437" /><path d="M14 14L1.900 7A14 14 0 0 0 14 28l6-10.500z" fill="#17984f" /><path d="M14 7h12.100L20 17z" fill="#fdc62e" /><path d="M14 7h12.100A14 14 0 0 0 14 0z" fill="#dc4437" /><circle cx="14" cy="14" r="6.500" fill="#fff" /><circle cx="14" cy="14" r="5" fill="#3f82ee" /></svg></button>
        <button class="open" aria-label="文件资源管理器"><svg width="28" height="24"><path d="M0 1q0-1 1-1h11l2 4h14v18H0z" fill="#e7ac1c" /><path d="M0 5h28v18H0z" fill="#fdd55e" /><path d="M5 24V13h18v11h-5v-6h-8v6z" fill="#3f97dc" /></svg></button>
        <button aria-label="QQ浏览器"><svg width="30" height="30" viewBox="0 0 30 30"><circle cx="14" cy="14" r="11" fill="none" stroke="#229af5" stroke-width="6" /><path d="M3 17a11 11 0 0 0 11 8" fill="none" stroke="#cfeaff" stroke-width="6" /><path d="M15 29a4 4 0 0 1 1-8 5 5 0 0 1 9-2 5 5 0 0 1 1 10z" fill="#fff" /></svg></button>
        <button class="open" aria-label="照片"><svg width="26" height="26"><path d="M1 1h24v24H1z" fill="#222" stroke="#fff" stroke-width="2" /><path d="M2 24V17l8-9 5 8 3-3 6 8v3z" fill="#fff" /></svg></button>
      </div>
      <div class="sys">
        <div class="speed"><span>上传:</span><span>1 kB/s</span><span>下载:</span><span>6 kB/s</span></div>
        <button aria-label="帮助"><svg width="32" height="32" viewBox="0 0 32 32"><circle cx="16" cy="16" r="15" fill="url(#g-ask)" stroke="#3796d8" stroke-width="2" /><path d="M10 12q0-6 6-6t6 5q0 3-3 5-3 1-3 4" fill="none" stroke="#fff" stroke-width="4" /><circle cx="16" cy="25" r="2.500" fill="#fff" /></svg></button>
        <div class="tray-icons">
          <button aria-label="更多"><svg width="18" height="10"><path d="M1 9l8-8 8 8" fill="none" stroke="#fff" stroke-width="1.500" /></svg></button>
          <button aria-label="电池"><svg width="20" height="14" fill="none" stroke="#fff"><path d="M5 3h13v9H5z" stroke-width="1.500" /><path d="M7 5h9v5H7z" fill="#fff" /><path d="M19 5v4M2 0v3M0 3h5v3H2v6" /></svg></button>
          <button aria-label="网络"><svg width="20" height="16" fill="none" stroke="#fff"><path d="M5 1h14v10H3V6M0 1h4v4H0zM6 15h9M10 11v4" /></svg></button>
          <button aria-label="音量"><svg width="20" height="16" fill="none" stroke="#fff"><path d="M1 5h3l4-4v14l-4-4H1zM11 5q2 3 0 6M14 3q3 5 0 10M17 1q4 7 0 14" /></svg></button>
          <button class="ime">中</button>
        </div>
        <button class="sogou" aria-label="输入法"><svg width="20" height="20" viewBox="0 0 20 20"><path d="M0 2l18-2 2 18-18 2z" fill="#f0562a" /><path d="M15 5q-9-3-9 1 0 2 4 3t4 3q0 4-9 1" fill="none" stroke="#fff" stroke-width="2.500" /></svg></button>
        <div class="clock"><span>0:28</span><span>2019/10/5</span></div>
        <button class="notice" aria-label="通知中心"><svg width="20" height="20"><path d="M.5 1.500h19v15h-5v3l-3-3H.500z" fill="none" stroke="#fff" /></svg></button>
      </div>
      <span class="watermark">bbs.nas66.com</span>
    </footer>
  </div>
</template>

<style>
body { margin: 0; }
</style>

<style scoped>
* { box-sizing: border-box; }
.screen { display: flex; flex-direction: column; min-height: 100vh; overflow: hidden; font: 15px/20px "DejaVu Sans", "Noto Sans CJK SC", sans-serif; color: #4a545e; }
.defs { position: absolute; }
button { display: flex; align-items: center; justify-content: center; padding: 0; border: 0; background: none; font: inherit; color: inherit; }
svg { display: block; flex: none; }
ul, dl, dd, p, h1, h2, h3 { margin: 0; padding: 0; list-style: none; }

.browser { font-family: "Noto Sans", "Noto Sans CJK SC", sans-serif; color: #3c4043; }
.tabstrip { display: flex; height: 42px; background: #dee1e6; }
.pinned { width: 58px; padding-left: 10px; }
.tab { display: flex; align-items: center; width: 299px; padding: 0 14px; }
.tab.current { padding-left: 15px; background: #fff; border-radius: 10px 10px 0 0; font-size: 16px; }
.tab.last { padding-left: 13px; border-left: 1px solid #8a8d91; border-image: linear-gradient(transparent 9px, #8a8d91 9px, #8a8d91 34px, transparent 34px) 1; border-right: 1px solid #8a8d91; }
.tab-title { flex: 1; margin: 0 10px; overflow: hidden; white-space: nowrap; }
.tab-title.fade { mask-image: linear-gradient(90deg, #000 195px, transparent 220px); }
.tab-title.bracket { margin-left: 6px; }
.new-tab { width: 54px; }
.win-controls { display: flex; margin-left: auto; padding-right: 1px; }
.win-controls button { width: 57px; height: 36px; }
.toolbar { display: flex; align-items: center; height: 47px; padding-right: 10px; border-bottom: 1px solid #b2b2b4; background: #fff; }
.nav { display: flex; padding: 0 6px 0 7px; }
.nav button { width: 41px; height: 36px; }
.omnibox { display: flex; flex: 1; align-items: center; height: 35px; padding: 0 14px; border-radius: 18px; background: #f1f3f4; font-size: 18px; }
.insecure { margin-left: 12px; padding-right: 7px; border-right: 2px solid #9b9ea1; line-height: 20px; color: #d93025; white-space: nowrap; }
.omnibox input { flex: 1; min-width: 0; margin: 0 12px 0 11px; padding: 0; border: 0; outline: 0; background: linear-gradient(90deg, #202124 118px, #80868b 118px); background-clip: text; color: transparent; font: 18px/24px "Noto Sans", sans-serif; }
.omnibox svg:last-child { margin-left: 22px; }
.ext { display: flex; flex-direction: column; align-items: center; width: 30px; margin: 0 12px; }
.ext span { width: 30px; border-radius: 2px; background: #4285f4; color: #fff; font-size: 13px; line-height: 15px; text-align: center; }
.avatar { height: 20px; padding: 0 25px 0 17px; border-left: 1px solid #ccc; }
.toolbar > button:last-child { width: 10px; margin-right: 12px; }

.dsm-bar { display: flex; height: 48px; border-top: 1px solid #2b5493; background: linear-gradient(90deg, #b8cbed, #b9cfee 60%, #bad4f0 80%, #b9cdee); }
.edge { width: 27px; background: #cfdcf3; }
.main-menu { width: 113px; border: 1px solid #8294b4; border-width: 0 2px 0 2px; background: linear-gradient(120deg, #f6f9fe, #c6d6f2 60%, #e4ecf9); }
.divider { width: 10px; background: linear-gradient(90deg, #8398bf, #b8cbed); }
.running { width: 78px; border: 2px solid #7f90ad; border-width: 0 2px; background: linear-gradient(135deg, #fff, #cddbf4 60%, #eef3fc); }
.tray { display: flex; align-items: center; gap: 27px; margin-left: auto; padding-right: 22px; }
.tray > button:first-child { margin-right: -8px; }
.bar-sep { width: 2px; height: 34px; margin-right: -1px; border-left: 1px solid #6b7d99; background: #e7effb; }
.dark { color: #48535e; }

.desktop { position: relative; flex: 1; min-height: 880px; }
.wallpaper { position: absolute; inset: 0; width: 100%; height: 100%; }
.icons { position: relative; display: flex; padding: 33px 0 0 13px; }
.icon-col { width: 170px; }
.app { flex-direction: column; justify-content: flex-start; width: 170px; height: 145px; color: #fff; white-space: pre; text-shadow: 1px 1px 1px #000, 1px 2px 3px rgb(0 0 0 / 70%); }
.app:last-child { height: 130px; }
.app span { margin-top: 6px; text-align: center; }

.window { position: absolute; top: 41px; left: 338px; right: 457px; display: flex; flex-direction: column; min-height: 662px; border-top: 4px solid #0a84e8; background: #fff; box-shadow: 0 2px 10px rgb(0 20 70 / 65%); }
.titlebar { display: flex; align-items: center; height: 40px; padding: 0 23px 0 15px; background: linear-gradient(#d8ebfa, #fff); }
.titlebar h1 { flex: 1; padding-left: 112px; color: #0a84e8; font-size: 16px; text-align: center; }
.title-tools { display: flex; gap: 26px; color: #98a4ae; }
.window-body { display: flex; flex: 1; }
.sidebar { display: flex; flex-direction: column; width: 299px; border-right: 1px solid #c6c9cc; box-shadow: inset -3px 0 3px -2px #ddd; }
.segments { display: flex; width: 255px; height: 36px; margin: 1px 0 0 22px; }
.segments button { flex: 1; border: 1px solid #d5e0eb; border-radius: 3px; background: #f3f7fc; color: #505a64; }
.segments .on { border-color: #2095ec; background: #2095ec; color: #fff; }
.group { justify-content: flex-start; gap: 12px; height: 46px; margin: 0 13px 5px 21px; padding: 10px 0 0 9px; border-bottom: 1px solid #e2e9f0; color: #6e92b2; font-weight: 700; }
.connections { flex: 1; }
.connections button { width: 262px; height: 62px; margin: 0 0 1px 21px; padding: 0 14px 0 6px; border-radius: 4px; font-size: 17px; }
.connections .picked { background: #d9edfe; color: #0a84e8; }
.connections span { flex: 1; margin-left: 11px; text-align: left; }
.hscroll { height: 10px; background: #d3d5d8; }
.hscroll.side { margin: 0 10px 2px 6px; background: #c9cbcd; }
.side-actions { display: flex; height: 53px; padding-bottom: 0; border-top: 1px solid #dde3e9; background: #f0f3f7; }
.side-actions button { flex: 1; padding-bottom: 4px; }
.side-actions button:first-child { flex: 0 0 149px; }
.side-actions button + button { border-left: 1px solid #d8dfe6; }

.content { display: flex; flex: 1; flex-direction: column; min-width: 0; padding: 1px 15px 10px 19px; }
.tabs { display: flex; height: 38px; padding-bottom: 8px; border-bottom: 1px solid #d8d8d8; box-shadow: 0 2px 3px -1px #ddd; }
.tabs button { position: relative; padding: 0 20px; border-right: 1px solid #d5dfe8; }
.tabs button:first-child { border-left: 1px solid #d5dfe8; }
.tabs .active { color: #0a84e8; font-weight: 700; }
.notch { position: absolute; bottom: -9px; left: 25px; }
h2 { height: 47px; padding: 17px 0 0 10px; border-bottom: 1px dashed #d0dae4; color: #0a84e8; font-size: 19px; font-weight: 400; line-height: 26px; }
.enable { display: flex; align-items: center; gap: 12px; height: 24px; margin: 18px 0 0 12px; }
.enable input { appearance: none; width: 24px; height: 24px; margin: 0; border: 1px solid #c9d4de; background: #fff; box-shadow: inset 0 1px 2px #e5eaee; }
.legend { display: flex; align-items: center; gap: 12px; margin: 17px 0 28px 21px; color: #a3a8ad; }
.legend label { display: flex; align-items: center; }
.legend input { appearance: none; margin: 0; }
.pause { gap: 13px; }
.pause input { width: 35px; height: 35px; border: 1px solid #ccd0d4; background: #fff; box-shadow: inset 0 0 0 4px #fff, inset 0 0 0 5px #dfe5ec; }
.run { gap: 18px; }
.run input { width: 25px; height: 25px; background: #aad8f9; }
table { width: 743px; margin-left: 10px; border-collapse: collapse; table-layout: fixed; }
th, td { height: 31px; padding: 0; border: 1px solid #dfe5eb; line-height: 20px; }
th { background: #f5f7fb; color: #a3a8ad; font-size: 14px; font-weight: 700; }
tbody th { font-weight: 400; }
.corner { width: 47px; }
.corner svg { margin: 8px 5px 0 auto; }
td { background: #aad8f9; box-shadow: inset 1px 1px #fff, inset 0 -1px #fff; }
.note { flex: 1; margin: 14px 0 0 10px; }
.note span { margin-right: 2px; color: #00a567; }
.hscroll.main { margin-right: 9px; }
.actions { display: flex; justify-content: flex-end; gap: 12px; margin-top: 3px; padding: 11px 13px 0 0; border-top: 2px solid #e2e2e2; }
.actions button { width: 103px; height: 35px; border: 1px solid #c3ced9; border-radius: 3px; background: linear-gradient(#f6fafe, #e9edf2); }
.actions .primary { border-color: #1580d4; background: linear-gradient(#33a8ff, #1890ea); color: #fff; }

.widgets { position: absolute; top: 32px; right: 10px; display: flex; flex-direction: column; gap: 10px; width: 425px; padding: 0 12px 13px 13px; border-radius: 4px; background: linear-gradient(#b9d0ee, #b9dbf5 30%, #b7daf5 50%, #b5cff4 75%, #b3cdf6); box-shadow: 0 2px 8px rgb(0 20 70 / 60%); }
.widgets-head { display: flex; align-items: center; gap: 22px; height: 30px; padding: 10px 9px 0 9px; }
.widgets-head .add { margin-right: auto; }
.card { min-height: 260px; padding: 8px 12px 3px; border: 1px solid #a9b8c9; background: linear-gradient(165deg, #eaf4fe 60%, #ebf2fd); }
.card h3 { display: flex; align-items: center; gap: 10px; height: 28px; font-size: 16px; font-weight: 500; }
.card h3 svg { width: 26px; }
.log-area { display: flex; margin: 8px -2px 0 5px; }
.log-area ul { flex: 1; min-width: 0; }
.log-area li { display: flex; align-items: center; gap: 13px; height: 35px; font-size: 14px; white-space: nowrap; color: #5c6670; }
.log-area li span { width: 318px; }
.log-scroll { display: flex; flex-direction: column; justify-content: space-between; padding: 13px 0; }
.health { display: flex; gap: 20px; margin: 16px 0 13px 13px; }
.health strong { display: block; margin: 10px 0; color: #20a800; font-size: 24px; font-weight: 400; line-height: 28px; }
.health p { margin-top: 16px; white-space: nowrap; }
dl { display: grid; grid-template-columns: 185px 1fr; padding-left: 3px; font-size: 14px; line-height: 35px; }
dt { font-weight: 500; }
dd { color: #5c6670; }
.caret { display: inline-block; margin: 0 0 2px 9px; border: 4px solid transparent; border-top: 5px solid #48535e; border-bottom: 0; }
.meters { margin: 13px 0 0 3px; }
.meter { display: flex; align-items: center; height: 30px; }
.meter b { width: 105px; }
.track { width: 187px; height: 20px; border-radius: 3px; background: #cdd6df; overflow: hidden; }
.fill { height: 100%; background: linear-gradient(90deg, #00a8ff, #2f76e2); }
.meter span { margin-left: 13px; }
.net { display: flex; align-items: center; height: 36px; padding-left: 5px; }
.net button { width: 106px; justify-content: flex-start; }
.net span { display: flex; align-items: center; gap: 4px; }
.up { width: 90px; color: #0a84e8; }
.down { color: #20a800; }
.chart { margin: 5px 0 0 69px; }
.chart text { fill: #5c6670; font-size: 42px; }

.taskbar { position: relative; display: flex; height: 50px; background: #1e1e1f; color: #fff; font-family: "Noto Sans", "Noto Sans CJK SC", sans-serif; }
.start { width: 60px; background: #18202b; }
.search { display: flex; align-items: center; gap: 13px; width: 430px; padding-left: 15px; border: 1px solid #bbb; background: #f2f2f2; }
.search input { flex: 1; min-width: 0; padding: 0; border: 0; outline: 0; background: none; font: 18px/24px "Noto Sans CJK SC", sans-serif; }
.search input::placeholder { color: #2b2b2b; opacity: 1; }
.pins { display: flex; }
.pins button { width: 62px; border-bottom: 3px solid transparent; border-top: 3px solid transparent; }
.pins .open { border-bottom-color: #76b9ed; }
.pins .focused { background: #4b4b4c; }
.sys { display: flex; align-items: center; margin-left: auto; padding-right: 31px; }
.speed { display: grid; grid-template-columns: 50px 58px; margin-right: 7px; font: 12px/13px "Liberation Mono", "Noto Sans CJK SC", monospace; }
.speed span:nth-child(even) { text-align: right; }
.tray-icons { display: flex; gap: 10px; margin: 0 16px 0 11px; }
.tray-icons button { width: 20px; }
.ime { font-size: 17px; }
.clock { display: flex; flex-direction: column; align-items: center; width: 100px; margin: 0 12px 0 9px; line-height: 23px; }
.watermark { position: absolute; right: 5px; bottom: 0; font: 900 22px/26px "DejaVu Sans", sans-serif; text-shadow: 1px 1px 1px #000, -1px -1px 1px #000; }
</style>
